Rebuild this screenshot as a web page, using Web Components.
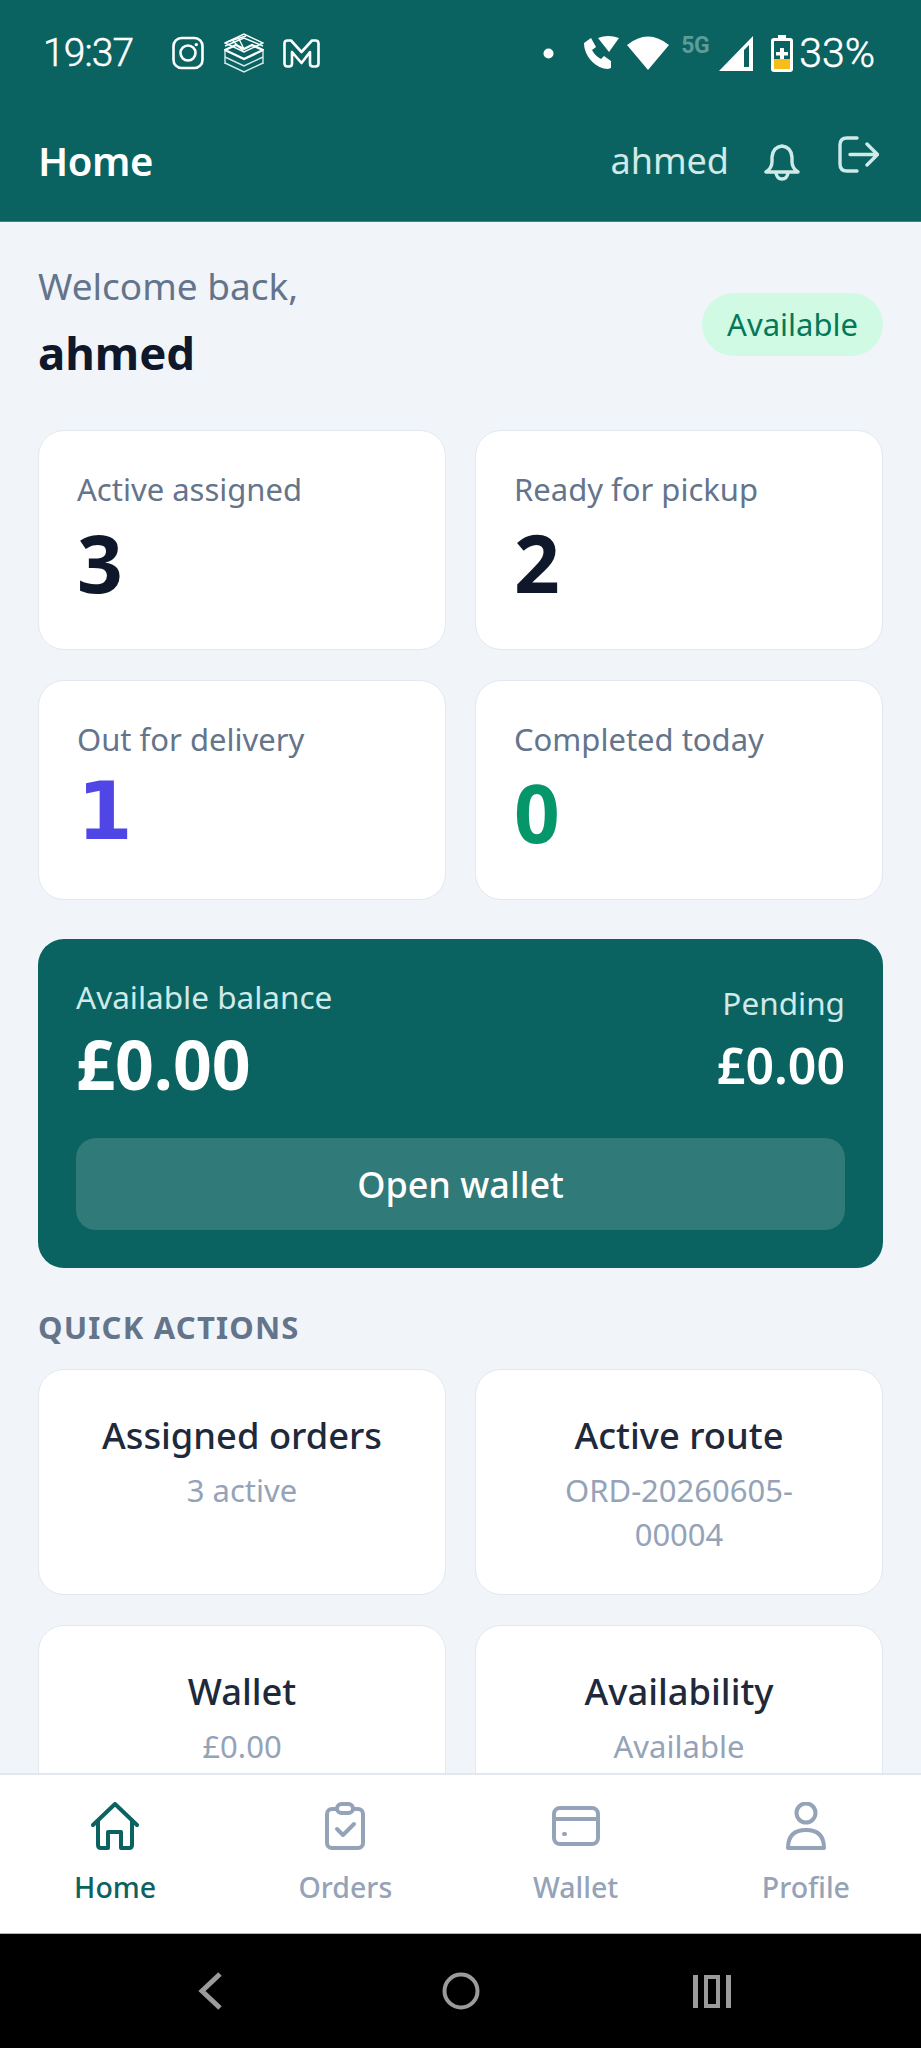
<!DOCTYPE html>
<html lang="en">
<head>
<meta charset="utf-8">
<title>Home</title>
<style>
    html, body { margin: 0; background: #000; }
    body { font-family: "Noto Sans", "Liberation Sans", sans-serif; }
</style>
</head>
<body>
<app-shell>
    <status-bar slot="top"></status-bar>
    <app-header slot="top" titulo="Home" usuario="ahmed"></app-header>

    <welcome-row nome="ahmed" estado="Available"></welcome-row>
    <card-grid>
        <stat-card rotulo="Active assigned">3</stat-card>
        <stat-card rotulo="Ready for pickup">2</stat-card>
        <stat-card rotulo="Out for delivery" tom="#4f46e5" fonte="DejaVu Sans">1</stat-card>
        <stat-card rotulo="Completed today" tom="#059669">0</stat-card>
    </card-grid>
    <balance-card saldo="£0.00" pendente="£0.00"></balance-card>
    <section-title>QUICK ACTIONS</section-title>
    <card-grid>
        <action-card titulo="Assigned orders">3 active</action-card>
        <action-card titulo="Active route">ORD-20260605-<br>00004</action-card>
        <action-card titulo="Wallet">£0.00</action-card>
        <action-card titulo="Availability">Available</action-card>
    </card-grid>

    <bottom-nav slot="bottom"></bottom-nav>
    <system-nav slot="bottom"></system-nav>
</app-shell>

<script>
class AppShell extends HTMLElement {
    constructor() {
        super();
        this.attachShadow({mode: "open"});
        this.shadowRoot.innerHTML = `
        <style>
            :host { display: flex; flex-direction: column; width: 921px; height: 2048px; overflow: hidden; background: #f1f5f9; }
            .topo { flex: none; background: #0a6361; border-bottom: 1px solid #3b8483; }
            .conteudo { flex: 1; min-height: 0; overflow: hidden; padding: 0 38px; }
            .base { flex: none; }
        </style>
        <div class="topo"><slot name="top"></slot></div>
        <div class="conteudo"><slot></slot></div>
        <div class="base"><slot name="bottom"></slot></div>`;
    }
}

class StatusBar extends HTMLElement {
    constructor() {
        super();
        this.attachShadow({mode: "open"});
        this.shadowRoot.innerHTML = `
        <style>
            :host { display: block; height: 107px; color: #fff; font-family: Roboto, sans-serif; }
            .barra { display: flex; align-items: flex-start; height: 100%; padding: 33px 46px 0 43px; box-sizing: border-box; }
            .hora { font-size: 39px; font-weight: 300; line-height: 40px; width: 129px; letter-spacing: -.9px; -webkit-text-stroke: .5px #fff; }
            .apps { display: flex; align-items: center; height: 40px; }
            .dir { margin-left: auto; display: flex; align-items: center; height: 40px; }
            svg { display: block; flex: none; }
            .g5 { font-size: 23px; font-weight: 700; color: #5e9c9b; line-height: 18px; margin: -15px 8px 0 12px; width: 30px; letter-spacing: -.5px; }
            .pct { font-size: 41px; font-weight: 300; line-height: 40px; margin-left: 6px; -webkit-text-stroke: .5px #fff; }
        </style>
        <div class="barra">
            <span class="hora">19:37</span>
            <div class="apps">
                <svg width="32" height="34" viewBox="0 0 32 34" fill="none" stroke="#fff" stroke-width="2.6"><rect x="1.5" y="2" width="29" height="30" rx="8"/><circle cx="16" cy="17" r="7.5"/><circle cx="24.3" cy="8.6" r="1.7" fill="#fff" stroke="none"/></svg>
                <svg style="margin-left:20px" width="40" height="40" viewBox="0 0 40 40" fill="none" stroke="#fff" stroke-width="1.4"><path d="M1 10 20 1l19 9-19 9z"/><path d="M1 13l19-8 19 8"/><path d="M3 9l19-6M8 7l12 12M14 4l6 12"/><path d="M1 17l11-5 8 4 8-4 11 5-19 9z" stroke-width="2.4"/><path d="M1 24l19 9 19-9M1 30l19 9 19-9" stroke="#d7eaea"/><path d="M1 17v14M39 17v14" stroke="#d7eaea"/></svg>
                <svg style="margin-left:19px" width="37" height="29" viewBox="0 0 37 29" fill="none" stroke="#fff" stroke-width="2.6" stroke-linejoin="round"><path d="M1.5 4.5Q1.5 1.5 4.5 1.5H8L18.5 13 29 1.5h3.5q3 0 3 3V24.5q0 3-3 3h-2.5q-3 0-3-3V13L18.500 24 9 13V24.500q0 3-3 3H4.500q-3 0-3-3z"/></svg>
            </div>
            <div class="dir">
                <svg width="11" height="11" viewBox="0 0 11 11"><circle cx="5.500" cy="5.500" r="5" fill="#fff"/></svg>
                <svg style="margin-left:29px" width="37" height="36" viewBox="0 0 37 36" fill="#fff"><path d="M1 8 8 3l5 9-4 3c2 4 5 7 9 9l3-3 7 5v7l-3 1C14 34 1 22 1 8z"/><path d="M15 3Q25-1 36 3L26 17z"/></svg>
                <svg style="margin-left:7px" width="42" height="36" viewBox="0 0 42 36" fill="#fff"><path d="M0 10Q21-7 42 10L21 35z"/></svg>
                <span class="g5">5G</span>
                <svg width="34" height="35" viewBox="0 0 34 35"><path fill="#fff" fill-rule="evenodd" d="M34 0V35H0zM30 9 25 14V31H30z"/></svg>
                <svg style="margin-left:18px" width="22" height="37" viewBox="0 0 22 37"><path fill="#fff" d="M7 0H15V3H19Q22 3 22 6V34Q22 37 19 37H3Q0 37 0 34V6Q0 3 3 3H7z"/><rect x="3" y="6" width="16" height="18" fill="#0a6361"/><rect x="3" y="24" width="16" height="10" fill="#f7bd1a"/><path fill="#fff" d="M9 13H13V17H17V20.500H13V24H9V20.500H5V17H9z"/></svg>
                <span class="pct">33%</span>
            </div>
        </div>`;
    }
}

class AppHeader extends HTMLElement {
    constructor() {
        super();
        this.attachShadow({mode: "open"});
        this.shadowRoot.innerHTML = `
        <style>
            :host { display: block; height: 114px; }
            .linha { display: flex; align-items: center; height: 106px; padding: 0 42px 0 38px; }
            h1 { margin: 0; font-size: 40px; font-weight: 600; color: #fff; letter-spacing: -.4px; }
            .usuario { margin-left: auto; font-size: 36px; color: #cfeae8; }
            svg { display: block; flex: none; fill: none; stroke: #cfeae8; stroke-width: 3.4; stroke-linecap: round; stroke-linejoin: round; }
        </style>
        <div class="linha">
            <h1>${this.getAttribute("titulo")}</h1>
            <span class="usuario">${this.getAttribute("usuario")}</span>
            <svg style="margin:5px 0 0 35px" width="36" height="37" viewBox="0 0 36 37"><path d="M2 28H34Q28 24 28 18V13Q27 3 18 2 9 3 8 13V18Q8 24 2 28z"/><path d="M12 29Q13 35 18 35T24 29"/></svg>
            <svg style="margin:-12px 0 0 38px" width="41" height="37" viewBox="0 0 41 37"><path d="M19 2H9Q2 2 2 9V28Q2 35 9 35H19"/><path d="M12 18.500H39M29 8 39.500 18.500 29 29"/></svg>
        </div>`;
    }
}

class WelcomeRow extends HTMLElement {
    constructor() {
        super();
        this.attachShadow({mode: "open"});
        this.shadowRoot.innerHTML = `
        <style>
            :host { display: flex; justify-content: space-between; align-items: center; padding: 39px 0 43px; }
            .ola { font-size: 37px; line-height: 50px; color: #64748b; }
            .nome { font-size: 45.5px; line-height: 70px; font-weight: 700; color: #0f172a; margin-top: 6px; }
            .estado { display: flex; align-items: center; height: 63px; padding: 0 25px; border-radius: 32px; background: #d1fae5; color: #047857; font-size: 31px; }
        </style>
        <div>
            <div class="ola">Welcome back,</div>
            <div class="nome">${this.getAttribute("nome")}</div>
        </div>
        <span class="estado">${this.getAttribute("estado")}</span>`;
    }
}

class CardGrid extends HTMLElement {
    constructor() {
        super();
        this.attachShadow({mode: "open"});
        this.shadowRoot.innerHTML = `
        <style>
            :host { display: grid; grid-template-columns: 1fr 1fr; gap: 30px 29px; }
        </style>
        <slot></slot>`;
    }
}

class StatCard extends HTMLElement {
    constructor() {
        super();
        const tom = this.getAttribute("tom") || "#0f172a";
        const fonte = this.getAttribute("fonte");
        this.attachShadow({mode: "open"});
        this.shadowRoot.innerHTML = `
        <style>
            :host { display: block; height: 220px; box-sizing: border-box; padding: 36px 38px 0 38px; background: #fff; border: 1.5px solid #e2e8f0; border-radius: 26px; }
            .rotulo { font-size: 31px; line-height: 44px; color: #64748b; }
            .valor { font-size: 80px; line-height: 102px; font-weight: 700; color: ${tom}; ${fonte ? `font-family: "${fonte}", sans-serif;` : ""} }
        </style>
        <div class="rotulo">${this.getAttribute("rotulo")}</div>
        <div class="valor"><slot></slot></div>`;
    }
}

class BalanceCard extends HTMLElement {
    constructor() {
        super();
        this.attachShadow({mode: "open"});
        this.shadowRoot.innerHTML = `
        <style>
            :host { display: block; box-sizing: border-box; height: 329px; margin-top: 39px; padding: 38px; background: #0a6361; border-radius: 26px; }
            .linha { display: flex; justify-content: space-between; height: 161px; }
            .rotulo { font-size: 31.5px; line-height: 40px; color: #cfeae8; }
            .saldo { font-size: 68px; line-height: 94px; font-weight: 700; color: #fff; }
            .dir { text-align: right; padding-top: 6px; }
            .pendente { font-size: 50px; line-height: 84px; font-weight: 600; color: #fff; }
            button { display: block; width: 100%; height: 92px; padding: 0; border: 0; border-radius: 20px; background: #307a79; color: #fff; font: 500 36px "Noto Sans", sans-serif; }
        </style>
        <div class="linha">
            <div>
                <div class="rotulo">Available balance</div>
                <div class="saldo">${this.getAttribute("saldo")}</div>
            </div>
            <div class="dir">
                <div class="rotulo">Pending</div>
                <div class="pendente">${this.getAttribute("pendente")}</div>
            </div>
        </div>
        <button>Open wallet</button>`;
    }
}

class SectionTitle extends HTMLElement {
    constructor() {
        super();
        this.attachShadow({mode: "open"});
        this.shadowRoot.innerHTML = `
        <style>
            :host { display: block; padding: 39px 0 22px; font-size: 31px; line-height: 40px; font-weight: 700; letter-spacing: 1.2px; color: #64748b; }
        </style>
        <slot></slot>`;
    }
}

class ActionCard extends HTMLElement {
    constructor() {
        super();
        this.attachShadow({mode: "open"});
        this.shadowRoot.innerHTML = `
        <style>
            :host { display: block; height: 226px; box-sizing: border-box; padding: 39px 30px; background: #fff; border: 1.5px solid #e2e8f0; border-radius: 26px; text-align: center; }
            .titulo { font-size: 36.3px; line-height: 52px; font-weight: 500; color: #1e293b; }
            .sub { font-size: 31px; line-height: 44px; color: #94a3b8; margin-top: 7px; }
        </style>
        <div class="titulo">${this.getAttribute("titulo")}</div>
        <div class="sub"><slot></slot></div>`;
    }
}

class BottomNav extends HTMLElement {
    constructor() {
        super();
        this.attachShadow({mode: "open"});
        const icones = {
            Home: `<svg width="48" height="48" viewBox="0 0 48 48"><path d="M2 23 24 2 46 23"/><path d="M7 19V43Q7 46 10 46H17V30H30V46H38Q41 46 41 43V19"/></svg>`,
            Orders: `<svg width="40" height="48" viewBox="0 0 40 48"><rect x="2" y="7" width="36" height="39" rx="5"/><rect x="12" y="2" width="16" height="9" rx="4.500" fill="#fff"/><path d="M12 27l6 6 11-11"/></svg>`,
            Wallet: `<svg width="48" height="48" viewBox="0 0 48 48"><rect x="2" y="6" width="44" height="36" rx="6"/><path d="M2 17H46"/><path d="M12 32H13"/></svg>`,
            Profile: `<svg width="40" height="48" viewBox="0 0 40 48"><circle cx="20" cy="11" r="9.500"/><path d="M2 46Q2 28 20 28T38 46z"/></svg>`,
        };
        const itens = Object.keys(icones).map((nome, i) => `
            <div class="item ${i == 0 ? "ativo" : ""}">${icones[nome]}<span>${nome}</span></div>`).join("");
        this.shadowRoot.innerHTML = `
        <style>
            :host { display: grid; grid-template-columns: repeat(4, 1fr); height: 161px; box-sizing: border-box; background: #fff; border-top: 2px solid #e2e8f0; border-bottom: 1px solid #b5b5b5; }
            .item { display: flex; flex-direction: column; align-items: center; padding-top: 27px; color: #94a3b8; }
            .ativo { color: #0a6361; }
            svg { display: block; fill: none; stroke: currentColor; stroke-width: 4; stroke-linecap: round; stroke-linejoin: round; }
            span { font-size: 28.5px; line-height: 40px; font-weight: 500; margin-top: 17px; }
        </style>
        ${itens}`;
    }
}

class SystemNav extends HTMLElement {
    constructor() {
        super();
        this.attachShadow({mode: "open"});
        this.shadowRoot.innerHTML = `
        <style>
            :host { display: grid; grid-template-columns: repeat(3, 251px); justify-content: center; justify-items: center; align-items: center; height: 114px; background: #000; }
            svg { display: block; fill: none; stroke: #9b9b9b; stroke-width: 4; }
        </style>
        <svg width="24" height="38" viewBox="0 0 24 38"><path d="M22 2 4 19 22 36" stroke-width="5"/></svg>
        <svg width="38" height="38" viewBox="0 0 38 38"><circle cx="19" cy="19" r="16.500"/></svg>
        <svg width="38" height="33" viewBox="0 0 38 33"><path d="M2.500 0V33M35.500 0V33" stroke-width="5"/><rect x="13" y="2" width="12" height="29"/></svg>`;
    }
}

customElements.define("app-shell", AppShell);
customElements.define("status-bar", StatusBar);
customElements.define("app-header", AppHeader);
customElements.define("welcome-row", WelcomeRow);
customElements.define("card-grid", CardGrid);
customElements.define("stat-card", StatCard);
customElements.define("balance-card", BalanceCard);
customElements.define("section-title", SectionTitle);
customElements.define("action-card", ActionCard);
customElements.define("bottom-nav", BottomNav);
customElements.define("system-nav", SystemNav);
</script>
</body>
</html>
